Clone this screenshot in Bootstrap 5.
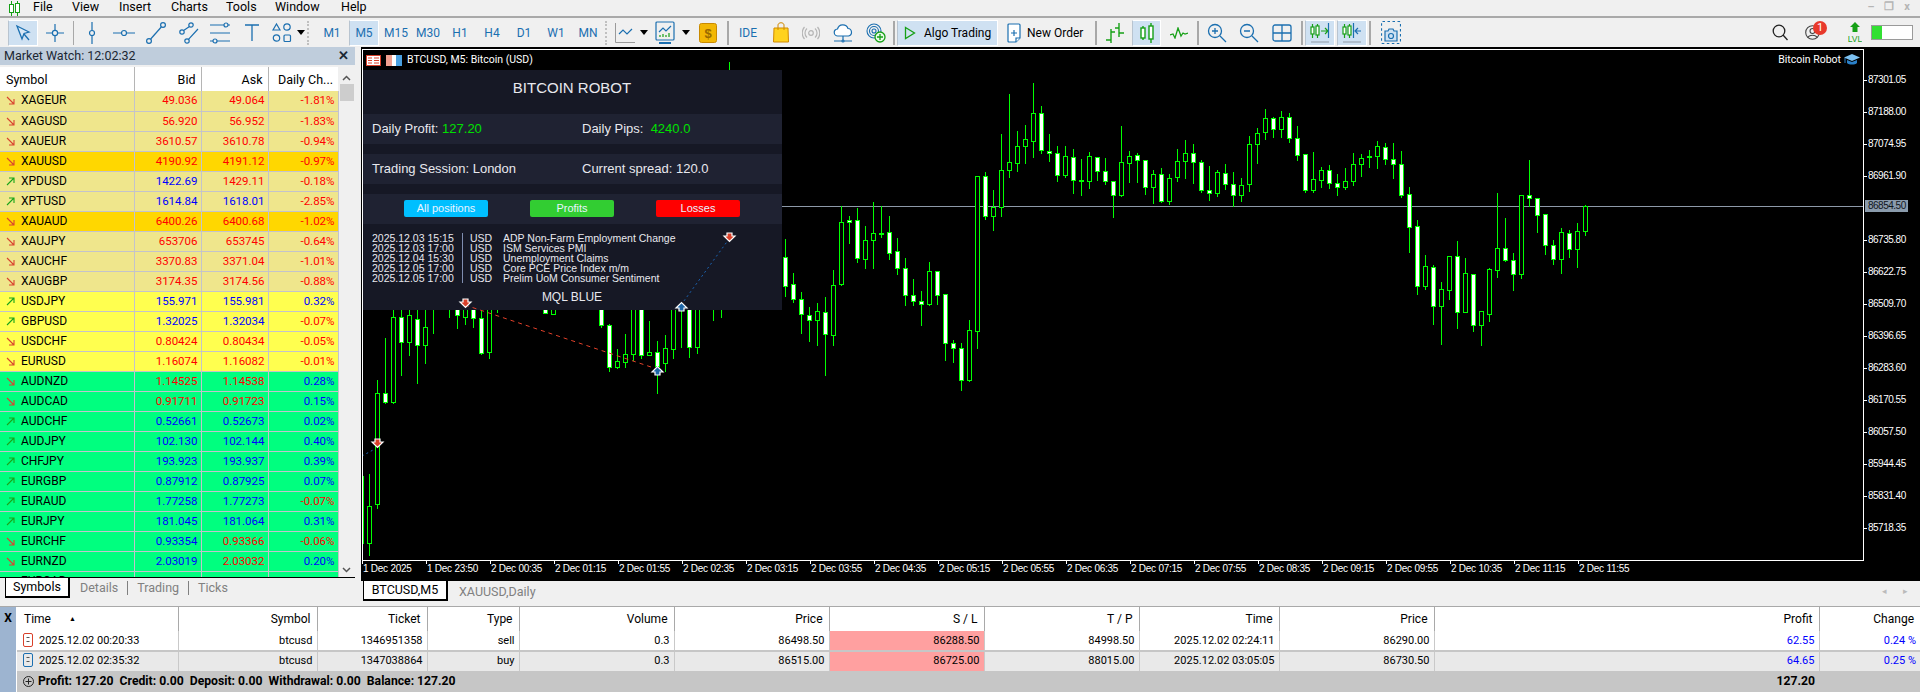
<!DOCTYPE html>
<html lang="en"><head><meta charset="utf-8"><title>MetaTrader 5</title>
<link href="https://cdn.jsdelivr.net/npm/bootstrap@5.3.0/dist/css/bootstrap.min.css" rel="stylesheet">
<script src="https://cdn.jsdelivr.net/npm/bootstrap@5.3.0/dist/js/bootstrap.bundle.min.js"></script>
<style>
html,body{height:692px;overflow:hidden}
body{font-family:Roboto,"Liberation Sans",sans-serif;font-size:11px;color:#000;background:#f0f0f0}
.mt-menu{height:16px;padding-left:7px;font-size:12.5px}
.mt-menu .logo{width:14px;margin-right:12px}
.mt-menu span{line-height:13px;align-self:flex-start}
.mt-m1{width:39px}.mt-m2{width:47px}.mt-m3{width:52px}.mt-m4{width:55px}.mt-m5{width:49px}.mt-m6{width:66px}
.winbtn{color:#b5b5b5;font-size:11px;width:18px;text-align:center;font-weight:700}
.mt-bar{height:31px;border-top:2px solid #a9a9a9;padding-left:8px;gap:2px;flex-shrink:0}
.tb{height:26px;display:flex;align-items:center;justify-content:center;flex-shrink:0;color:#1b6fb0;font-size:12px;border:1px solid transparent}
.tb.on{background:#cfe1f2;border-color:#fff #fff #fff #b8c4d0}
.tb svg{display:block}
.t6{width:6px}.t8{width:8px}.t26{width:26px}.t28{width:28px}.t29{width:29px}.t30{width:30px}.t31{width:31px}.t32{width:32px}.t34{width:34px}.t36{width:36px}
.algo{width:101px;color:#000;justify-content:flex-start;padding-left:6px;gap:8px}
.neworder{width:93px;color:#000;justify-content:flex-start;padding-left:6px;gap:6px}
.sep{width:2px;height:24px;background:#a8a8a8;flex-shrink:0}
.sep1{width:1px;margin:0 1px}
.grip{width:4px;height:24px;flex-shrink:0;border-left:2px dotted #c0c0c0}
.caret{width:0;height:0;border-left:4px solid transparent;border-right:4px solid transparent;border-top:5px solid #000}
.mainrow{height:559px}
.leftcol{width:360px;flex-shrink:0}
.mwtitle{height:18px;width:355px;background:#bfcddc;padding:0 6px 0 4px;font-size:12.5px;line-height:18px;color:#1b2733}
.mwbody{height:510px;width:355px;margin-top:2px}
.mwscroll{width:17px;background:#f0f0f0}
.scrollthumb{height:17px;background:#cdcdcd;margin:3px 1px 0}
table.mwt{width:338px;table-layout:fixed;--bs-table-color:#000;font-size:11.5px;border-color:#c3c3cb}
.mwt th,.mwt td{padding:0 3px 0 0;height:20px;line-height:19px;font-weight:400;text-align:right;border-bottom:1px solid #c3c3cb;border-right:1px solid #c3c3cb;white-space:nowrap;overflow:hidden;vertical-align:middle}
.mwt thead th{height:24px;background:#fff;border-bottom:0;border-right:1px solid #b5b5b5;padding-right:5px;font-size:12.5px}
.mwt thead th:last-child{border-right:0}
.mwt td:first-child,.mwt th:first-child{text-align:left;padding-left:6px}
.mwt td:first-child{font-size:12px}
.mwt td:first-child svg{margin-right:6px;vertical-align:-1px}
tr.rm{--bs-table-bg:#efe68c}tr.rg{--bs-table-bg:#ffd700}tr.ry{--bs-table-bg:#ffff4f}tr.rs{--bs-table-bg:#00ff7f}
.mwt td.r{color:#f00}.mwt td.b{color:#00f}
.mwtabs{height:29px;border-top:1px solid #000;width:355px;font-size:12.5px;color:#808080}
.tabon{height:20px;background:#fff;color:#000;border:1px solid #000;border-top:0;border-right-width:2px;border-bottom-width:2px;width:65px;text-align:center;line-height:18px;margin-left:5px;margin-right:10px}
.tabtxt{line-height:20px}
.tabsep{width:1px;height:14px;background:#808080;margin:3px 9px 0}
.chartcol{min-width:0;border-left:1px solid #f0f0f0}
.chartbox{height:534px;background:#000;position:relative;overflow:hidden;border-left:1px solid #000}
.chartbox>svg.candles{position:absolute;left:0;top:0}
.charttitle{position:absolute;left:4px;top:7px;color:#fff;font-size:10.5px;line-height:12px;gap:5px}
.chartname{position:absolute;right:60px;top:7px;color:#fff;font-size:10.5px;line-height:12px;gap:3px}
.robot{position:absolute;left:0;top:23px;width:420px;height:240px;background:#161825;color:#e8e8ee;font-family:"Liberation Sans",sans-serif;font-size:13px}
.robot .rtitle{height:44px;font-size:15px;line-height:36px;text-align:center}
.robot .rline{height:30px;background:#1f2232;line-height:30px;padding-left:10px}
.robot .rgap{height:10px}
.robot .rcell{width:210px}
.robot .pos{color:#00e000}
.rbtns{height:30px;background:#1f2232;padding:6px 26px 7px 42px;gap:42px}
.rbtn{width:84px;height:17px;border-radius:2px;text-align:center;line-height:17px;color:#e8f4ff;font-size:11px}
.rb1{background:#00bfff}.rb2{background:#32cd32}.rb3{background:#f00}
.rnews{padding:9px 0 0 10px;font-size:10.5px;line-height:10px}
.rnews .d{width:84px}.rnews .s{width:1px;background:#7f8db0;margin:0 7px 0 6px}.rnews .u{width:33px}
.rbrand{text-align:center;line-height:14px;margin-top:7px;font-size:12px}
.overlay{position:absolute;left:0;top:0;pointer-events:none}
.pxl{position:absolute;left:1503px;font-size:10px;line-height:12px;color:#fff;font-family:"Liberation Sans",sans-serif;letter-spacing:-.5px;width:45px;padding-left:3px}
.pxl.cur{background:#8a9bac;color:#10161c;width:43px}
.tlb{position:absolute;top:516px;font-size:10px;line-height:12px;color:#fff;font-family:"Liberation Sans",sans-serif;letter-spacing:-.25px;white-space:nowrap}
.ctabs{height:25px;font-size:12.5px;color:#808080}
.ctabon{width:85px;height:20px;background:#fff;color:#000;border:1px solid #000;border-top:0;border-right-width:2px;border-bottom-width:2px;text-align:center;line-height:18px;margin-left:2px;margin-right:11px}
.ctabtxt{line-height:22px}
.navarr{color:#bbb;font-size:9px;width:21px;text-align:center;line-height:20px}
.term{height:86px;border-top:1px solid #a9a9a9;background:#fff}
.tstrip{width:17px;background:#9db4d0;border-right:1px solid #fff;font-weight:700;font-size:12px;text-align:center;line-height:22px;color:#000;flex-shrink:0}
table.trt{width:1903px;table-layout:fixed;font-size:11px;--bs-table-color:#000;margin:0}
.trt th,.trt td{padding:0 4px 0 0;text-align:right;font-weight:400;white-space:nowrap;overflow:hidden;border-right:1px solid #c9c9c9;border-bottom:0;vertical-align:middle}
.trt thead th{height:24px;padding-right:6px;border-right:1px solid #a9a9a9;font-size:12px}
.trt th:last-child,.trt td:last-child{border-right:0}
.trt tbody td{line-height:18px}
.trt tr.row1 td{height:20px;border-bottom:2px solid #c6c6c6}
.trt tr.row2 td{height:19px}
.trt tr.row2{--bs-table-bg:#e9e9e9}
.trt td.sl{--bs-table-bg:#ffa0a0;background:#ffa0a0}
.trt td.bl{color:#00f}
.trt th.tl,.trt td.tl{text-align:left}
.trt th.tl{padding-left:7px}
.sortup{font-size:7px;vertical-align:2px;margin-left:18px}
.trt tr.tot td{--bs-table-bg:#c6c6c6;background:#c6c6c6;height:21px;font-weight:700;border-right:0;font-size:12.2px}
.trt td.tl svg{margin:0 6px 0 6px;vertical-align:-3px}
.trt tr.tot td.tl svg{margin-right:4px;vertical-align:-2px}
.lvlbox{width:20px;margin-left:18px}
.acct{width:26px;margin-left:4px}
.srch{width:26px}
.lvlbar{width:42px;height:15px;border:1px solid #9a9a9a;background:#fff;margin:0 7px 0 4px}
.lvlfill{background:#33e033}
.notif{background:#e8392b;width:14px;height:14px;top:0;right:-3px;line-height:14px;font-size:11px}
</style></head>
<body class="d-flex flex-column">

<div class="mt-menu d-flex align-items-center">
  <svg class="logo" width="14" height="15" viewBox="0 0 14 15"><g fill="none" stroke="#16a016"><path d="M4.5 0v15M10.5 0v15"/><rect x="2.5" y="3.5" width="4" height="8" fill="#fff"/><rect x="8.5" y="2.5" width="4" height="9" fill="#fff"/></g></svg>
  <span class="mt-m1">File</span><span class="mt-m2">View</span><span class="mt-m3">Insert</span><span class="mt-m4">Charts</span><span class="mt-m5">Tools</span><span class="mt-m6">Window</span><span>Help</span>
  <span class="ms-auto winbtn">–</span><span class="winbtn">❐</span><span class="winbtn me-1">x</span>
</div>

<div class="mt-bar d-flex align-items-center">
  <div class="tb t30 on"><svg width="18" height="18" viewBox="0 0 18 18" fill="#d8e8f6" stroke="#1b6fb0" stroke-width="1.3"><path d="M3 2l12 6-5 1.5L8 15z"/><path d="M10 10l5 6" /></svg></div>
  <div class="tb t30"><svg width="20" height="20" viewBox="0 0 20 20" fill="none" stroke="#1b6fb0" stroke-width="1.2"><path d="M10 1v6M10 13v6M1 10h6M13 10h6"/><circle cx="10" cy="10" r="2.6"/></svg></div>
  <div class="sep sep1"></div>
  <div class="tb t30"><svg width="20" height="22" viewBox="0 0 20 22" fill="none" stroke="#1b6fb0" stroke-width="1.2"><path d="M10 0v8.500M10 13.500v8.500"/><circle cx="10" cy="11" r="2.500"/></svg></div>
  <div class="tb t30"><svg width="22" height="14" viewBox="0 0 22 14" fill="none" stroke="#1b6fb0" stroke-width="1.2"><path d="M0 7h8.500M13.500 7h8.500"/><circle cx="11" cy="7" r="2.500"/></svg></div>
  <div class="tb t30"><svg width="22" height="24" viewBox="0 0 22 24" fill="none" stroke="#1b6fb0" stroke-width="1.2"><circle cx="4" cy="20" r="2.400"/><circle cx="18" cy="4" r="2.400"/><path d="M5.700 18L16.300 6"/></svg></div>
  <div class="tb t30"><svg width="22" height="24" viewBox="0 0 22 24" fill="none" stroke="#1b6fb0" stroke-width="1.2"><circle cx="5" cy="11" r="2.200"/><circle cx="14" cy="4" r="2.200"/><circle cx="10" cy="20" r="2.200"/><path d="M6.600 9.500L12.500 5.500M11.500 18.300L21 8"/></svg></div>
  <div class="tb t30"><svg width="22" height="22" viewBox="0 0 22 22" fill="none" stroke="#1b6fb0" stroke-width="1.2"><path d="M1 3h14M19 3h2M1 11h20M1 19h3M8 19h13"/><circle cx="17" cy="3" r="2"/><circle cx="6" cy="19" r="2"/></svg></div>
  <div class="tb t30"><svg width="16" height="18" viewBox="0 0 16 18" fill="none" stroke="#1b6fb0" stroke-width="1.3"><path d="M1 1h14M8 1v16"/></svg></div>
  <div class="tb t26"><svg width="20" height="22" viewBox="0 0 20 22" fill="none" stroke="#1b6fb0" stroke-width="1.2"><path d="M4.500 2L8 8H1z"/><circle cx="15" cy="5" r="3.200"/><rect x="12" y="13" width="6.500" height="6.500" rx="1"/><circle cx="4.500" cy="16" r="3.200"/></svg></div>
  <div class="tb t8"><span class="caret"></span></div>
  <div class="grip me-1"></div>
  <div class="tb t30">M1</div><div class="tb t30 on">M5</div><div class="tb t30">M15</div><div class="tb t30">M30</div><div class="tb t30">H1</div><div class="tb t30">H4</div><div class="tb t30">D1</div><div class="tb t30">W1</div><div class="tb t30">MN</div>
  <div class="grip"></div>
  <div class="tb t28"><svg width="20" height="20" viewBox="0 0 20 20" fill="none" stroke="#9a9a9a"><path d="M.5 0v19.500H20"/><path d="M4 11l4-4 4 4 5-5" stroke="#1b6fb0" stroke-width="1.2"/></svg></div>
  <div class="tb t6"><span class="caret"></span></div>
  <div class="tb t32"><svg width="20" height="24" viewBox="0 0 20 24" fill="none" stroke="#1b6fb0" stroke-width="1.2"><rect x="1" y="1" width="18" height="18" rx="1"/><path d="M4 22h12" stroke-width="2"/><path d="M4 11l4-4 3 3 5-5"/><path d="M5 16v-2M8 16v-3M11 16v-2M14 16v-4" stroke="#16a016"/></svg></div>
  <div class="tb t6"><span class="caret"></span></div>
  <div class="tb t34"><svg width="18" height="20" viewBox="0 0 18 20"><rect x=".5" y=".5" width="17" height="19" rx="2" fill="#f2b705" stroke="#c98a00"/><text x="9" y="15" text-anchor="middle" font-size="13" font-weight="700" font-family="Liberation Sans" fill="#9a6a00">$</text></svg></div>
  <div class="sep"></div>
  <div class="tb t34">IDE</div>
  <div class="tb t28"><svg width="16" height="21" viewBox="0 0 16 21"><path d="M1 6h14l.5 14H.5z" fill="#ffd21e" stroke="#d08a00"/><path d="M5 8V3c0-3 6-3 6 0v5" fill="none" stroke="#d08a00"/></svg></div>
  <div class="tb t28"><svg width="18" height="14" viewBox="0 0 18 14" fill="none" stroke="#b5b5b5" stroke-width="1.2"><circle cx="9" cy="7" r="2.300"/><path d="M5 2.500a6 6 0 000 9M13 2.500a6 6 0 010 9M2.500 1a9 9 0 000 12M15.500 1a9 9 0 010 12"/></svg></div>
  <div class="tb t32"><svg width="20" height="20" viewBox="0 0 20 20" fill="#fff" stroke="#1b6fb0" stroke-width="1.2"><path d="M5 13a3.500 3.500 0 01-.5-7A5.500 5.500 0 0115 5.500 3.800 3.800 0 0115.500 13z"/><path d="M1 18h18M10 13v5" fill="none"/><circle cx="10" cy="18" r="1"/></svg></div>
  <div class="tb t30"><svg width="20" height="20" viewBox="0 0 20 20" fill="none" stroke="#1b6fb0" stroke-width="1.1"><circle cx="8" cy="8" r="7"/><circle cx="8" cy="8" r="4.500"/><circle cx="8" cy="8" r="2"/><circle cx="14" cy="14" r="5" fill="#e9f9e9" stroke="#16a016" stroke-width="1.300"/><path d="M14 11v6M11 14h6" stroke="#16a016" stroke-width="1.300"/></svg></div>
  <div class="sep"></div>
  <div class="tb algo on"><svg width="12" height="14" viewBox="0 0 12 14" fill="none" stroke="#16a016" stroke-width="1.300"><path d="M1.500 1.500l9 5.500-9 5.500z"/></svg><span>Algo Trading</span></div>
  <div class="tb neworder"><svg width="14" height="20" viewBox="0 0 14 20" fill="#fff" stroke="#1b6fb0" stroke-width="1.200"><path d="M1 2q0-1 1-1h10q1 0 1 1v13l-4 4H2q-1 0-1-1z"/><path d="M7 7v6M4 10h6M9 19v-4h4"/></svg><span>New Order</span></div>
  <div class="sep"></div>
  <div class="tb t31"><svg width="20" height="20" viewBox="0 0 20 20" fill="none" stroke="#16a016" stroke-width="1.400"><path d="M6 6v14M1 17h5M6 9h4M14 0v14M10 5h4M14 10h5"/></svg></div>
  <div class="tb t29 on"><svg width="16" height="20" viewBox="0 0 16 20" fill="none" stroke="#16a016" stroke-width="1.400"><path d="M4 3v14M12 0v20"/><rect x="2" y="5" width="4" height="10" fill="#fff"/><rect x="10" y="3" width="4" height="13" fill="#fff"/></svg></div>
  <div class="tb t32"><svg width="18" height="12" viewBox="0 0 18 12" fill="none" stroke="#16a016" stroke-width="1.300"><path d="M0 8l3-1 2 4 3-10 3 8 2-3 2 1 3-1"/></svg></div>
  <div class="sep"></div>
  <div class="tb t32"><svg width="20" height="20" viewBox="0 0 20 20" fill="none" stroke="#1b6fb0" stroke-width="1.300"><circle cx="8" cy="8" r="6.500"/><path d="M8 5v6M5 8h6M13 13l6 6"/></svg></div>
  <div class="tb t28"><svg width="20" height="20" viewBox="0 0 20 20" fill="none" stroke="#1b6fb0" stroke-width="1.300"><circle cx="8" cy="8" r="6.500"/><path d="M5 8h6M13 13l6 6"/></svg></div>
  <div class="tb t34"><svg width="20" height="18" viewBox="0 0 20 18" fill="none" stroke="#1b6fb0" stroke-width="1.300"><rect x="1" y="1" width="18" height="16" rx="2"/><path d="M10 1v16M1 9h18"/></svg></div>
  <div class="sep"></div>
  <div class="tb t30 on"><svg width="20" height="20" viewBox="0 0 20 20" fill="none" stroke="#16a016" stroke-width="1.200"><path d="M2.500 1v14M7.500 1v14"/><rect x="1" y="4" width="3" height="7" fill="#fff"/><rect x="6" y="3" width="3" height="9" fill="#fff"/><path d="M11 8h6M15 5l3 3-3 3"/><path d="M18.500 0v15" stroke="#1b6fb0"/><path d="M1 19h18" stroke="#9aa7b3"/></svg></div>
  <div class="tb t30 on"><svg width="20" height="20" viewBox="0 0 20 20" fill="none" stroke="#16a016" stroke-width="1.200"><path d="M2.500 1v14M7.500 1v14"/><rect x="1" y="4" width="3" height="7" fill="#fff"/><rect x="6" y="3" width="3" height="9" fill="#fff"/><path d="M11.500 0v15" stroke="#1b6fb0"/><path d="M19 8h-5M16 5l-3 3 3 3" stroke="#1b6fb0"/><path d="M1 19h18" stroke="#9aa7b3"/></svg></div>
  <div class="sep"></div>
  <div class="tb t36"><svg width="20" height="23" viewBox="0 0 20 23" fill="none" stroke="#1b6fb0" stroke-width="1.200"><rect x=".5" y=".5" width="19" height="22" rx="1" stroke-dasharray="2.500 2.500"/><path d="M4 10h3l1-2h4l1 2h3v10H4z" fill="#cfe1f2"/><circle cx="10" cy="15" r="2.500"/></svg></div>
  <div class="ms-auto tb srch"><svg width="16" height="17" viewBox="0 0 16 17" fill="none" stroke="#222" stroke-width="1.300"><circle cx="7" cy="7" r="5.800"/><path d="M11 11l4.500 5"/></svg></div>
  <div class="tb position-relative acct"><svg width="15" height="15" viewBox="0 0 15 15" fill="none" stroke="#444" stroke-width="1.100"><circle cx="7.500" cy="7.500" r="6.800"/><circle cx="7.500" cy="6" r="2.500"/><path d="M3 12.500c1-3 8-3 9 0"/></svg><span class="position-absolute text-white text-center rounded-circle notif">1</span></div>
  <div class="tb lvlbox"><svg width="14" height="21" viewBox="0 0 14 21"><path d="M7 0l5 5H9.500v5h-5V5H2z" fill="#16a016"/><text x="7" y="20" text-anchor="middle" font-size="8.500" font-family="Liberation Sans" fill="#16a016" stroke="none">LVL</text></svg></div>
  <div class="progress rounded-0 lvlbar"><div class="progress-bar lvlfill" style="width:24%"></div></div>
</div>

<div class="d-flex mainrow">
  <div class="leftcol d-flex flex-column">
    <div class="mwtitle d-flex justify-content-between"><span>Market Watch: 12:02:32</span><span class="fw-bold">✕</span></div>
    <div class="mwbody d-flex overflow-hidden">
      <table class="table mwt mb-0" id="mw">
        <colgroup><col style="width:134px"><col style="width:67px"><col style="width:67px"><col style="width:70px"></colgroup>
        <thead><tr><th>Symbol</th><th>Bid</th><th>Ask</th><th>Daily Ch...</th></tr></thead>
        <tbody></tbody>
      </table>
      <div class="mwscroll flex-grow-1 d-flex flex-column align-items-center">
        <svg class="mt-2" width="9" height="6" viewBox="0 0 9 6" fill="none" stroke="#555" stroke-width="1.500"><path d="M1 5l3.500-3.500L8 5"/></svg>
        <div class="scrollthumb align-self-stretch"></div>
        <svg class="mt-auto mb-1" width="9" height="6" viewBox="0 0 9 6" fill="none" stroke="#555" stroke-width="1.500"><path d="M1 1l3.500 3.500L8 1"/></svg>
      </div>
    </div>
    <div class="mwtabs d-flex">
      <div class="tabon">Symbols</div><span class="tabtxt">Details</span><span class="tabsep"></span><span class="tabtxt">Trading</span><span class="tabsep"></span><span class="tabtxt">Ticks</span>
    </div>
  </div>

  <div class="chartcol flex-grow-1 d-flex flex-column">
    <div class="chartbox" id="chart">
      <svg class="candles" id="cd" width="1558" height="534" viewBox="362 47 1558 534" shape-rendering="crispEdges"></svg>
      <div class="robot">
        <div class="rtitle">BITCOIN ROBOT</div>
        <div class="rline d-flex"><div class="rcell">Daily Profit: <span class="pos">127.20</span></div><div>Daily Pips:&nbsp; <span class="pos">4240.0</span></div></div>
        <div class="rgap"></div>
        <div class="rline d-flex"><div class="rcell">Trading Session: London</div><div>Current spread: 120.0</div></div>
        <div class="rgap"></div>
        <div class="rbtns d-flex"><div class="rbtn rb1">All positions</div><div class="rbtn rb2">Profits</div><div class="rbtn rb3">Losses</div></div>
        <div class="rnews d-flex">
          <div class="d">2025.12.03 15:15<br>2025.12.03 17:00<br>2025.12.04 15:30<br>2025.12.05 17:00<br>2025.12.05 17:00</div>
          <div class="s"></div>
          <div class="u">USD<br>USD<br>USD<br>USD<br>USD</div>
          <div>ADP Non-Farm Employment Change<br>ISM Services PMI<br>Unemployment Claims<br>Core PCE Price Index m/m<br>Prelim UoM Consumer Sentiment</div>
        </div>
        <div class="rbrand">MQL BLUE</div>
      </div>
      <svg class="overlay" width="1558" height="534" viewBox="362 47 1558 534">
        <path d="M465 305L657 369" stroke="#e0402a" stroke-dasharray="4 4" fill="none"/>
        <path d="M681 305L729 239M362 456L373 450" stroke="#1b64b4" stroke-dasharray="2 3" fill="none"/>
        <g stroke="#fff" stroke-width="1.200" fill="#d9402a"><path d="M727 233h5v3h3l-5.500 5.500L724 236h3z"/><path d="M463 299h5v3h3l-5.500 5.500L460 302h3z"/><path d="M375 439h5v3h3l-5.500 5.500L372 442h3z"/></g>
        <g stroke="#fff" stroke-width="1.200" fill="#1d66a8"><path d="M679 311h5v-3h3l-5.500-5.500L676 308h3z"/><path d="M655 375h5v-3h3l-5.500-5.500L652 372h3z"/></g>
        <path d="M362.500 560.500V49.500H1863.500V560.500H362.500" fill="none" stroke="#fff" shape-rendering="crispEdges"/>
      </svg>
      <div class="charttitle d-flex align-items-center">
        <svg width="15" height="11" viewBox="0 0 15 11"><rect x=".5" y=".5" width="14" height="10" fill="#fff" stroke="#d9402a"/><path d="M2 3h4M8 3h5M2 5.500h4M8 5.500h5M2 8h4M8 8h5" stroke="#d9402a"/></svg>
        <svg width="16" height="11" viewBox="0 0 16 11"><rect width="6" height="11" fill="#f0a090"/><rect x="6" y="3" width="4" height="8" fill="#fff"/><rect x="10" width="6" height="11" fill="#4aa0e0"/><rect x="6" width="4" height="3" fill="#fff"/></svg>
        <span>BTCUSD, M5:&nbsp;Bitcoin (USD)</span>
      </div>
      <div class="chartname d-flex align-items-center"><span>Bitcoin Robot</span>
        <svg width="16" height="12" viewBox="0 0 16 12"><path d="M8 0l8 3.500L8 7 0 3.500z" fill="#7cc0f0"/><path d="M3 6v3c2 2 8 2 10 0V6L8 8z" fill="#2a80c8"/><path d="M1 4v5" stroke="#2a80c8"/></svg></div>
    </div>
    <div class="ctabs d-flex">
      <div class="ctabon">BTCUSD,M5</div><span class="ctabtxt">XAUUSD,Daily</span>
      <span class="ms-auto navarr">◂</span><span class="navarr me-1">▸</span>
    </div>
  </div>
</div>

<div class="term d-flex">
  <div class="tstrip">X</div>
  <table class="table trt">
    <colgroup><col style="width:161px"><col style="width:139px"><col style="width:110px"><col style="width:92px"><col style="width:155px"><col style="width:155px"><col style="width:155px"><col style="width:155px"><col style="width:140px"><col style="width:155px"><col style="width:385px"><col style="width:101px"></colgroup>
    <thead><tr><th class="tl">Time<span class="sortup">▲</span></th><th>Symbol</th><th>Ticket</th><th>Type</th><th>Volume</th><th>Price</th><th>S / L</th><th>T / P</th><th>Time</th><th>Price</th><th>Profit</th><th>Change</th></tr></thead>
    <tbody>
      <tr class="row1"><td class="tl"><svg width="10" height="14" viewBox="0 0 10 14" fill="none" stroke="#d9402a"><rect x=".5" y=".5" width="9" height="13" rx="1.500"/><path d="M3.500 4.500h3M3.500 8.500h3" stroke="#555"/></svg>2025.12.02 00:20:33</td><td>btcusd</td><td>1346951358</td><td>sell</td><td>0.3</td><td>86498.50</td><td class="sl">86288.50</td><td>84998.50</td><td>2025.12.02 02:24:11</td><td>86290.00</td><td class="bl">62.55</td><td class="bl">0.24 %</td></tr>
      <tr class="row2"><td class="tl"><svg width="10" height="14" viewBox="0 0 10 14" fill="none" stroke="#1b6fb0"><rect x=".5" y=".5" width="9" height="13" rx="1.500"/><path d="M3.500 4.500h3M3.500 8.500h3" stroke="#555"/></svg>2025.12.02 02:35:32</td><td>btcusd</td><td>1347038864</td><td>buy</td><td>0.3</td><td>86515.00</td><td class="sl">86725.00</td><td>88015.00</td><td>2025.12.02 03:05:05</td><td>86730.50</td><td class="bl">64.65</td><td class="bl">0.25 %</td></tr>
      <tr class="tot"><td class="tl" colspan="10"><svg width="11" height="11" viewBox="0 0 11 11" fill="none" stroke="#222"><circle cx="5.500" cy="5.500" r="5"/><path d="M5.500 2.500v6M2.500 5.500h6"/></svg>Profit: 127.20&nbsp; Credit: 0.00&nbsp; Deposit: 0.00&nbsp; Withdrawal: 0.00&nbsp; Balance: 127.20</td><td>127.20</td><td></td></tr>
    </tbody>
  </table>
</div>

<script>
// symbol, dir(0 down,1 up), row class, bid, ask, change, colours
var rows=[["XAGEUR",0,"rm","49.036","49.064","-1.81%","rrr"],["XAGUSD",0,"rm","56.920","56.952","-1.83%","rrr"],["XAUEUR",0,"rm","3610.57","3610.78","-0.94%","rrr"],["XAUUSD",0,"rg","4190.92","4191.12","-0.97%","rrr"],["XPDUSD",1,"rm","1422.69","1429.11","-0.18%","brr"],["XPTUSD",1,"rm","1614.84","1618.01","-2.85%","bbr"],["XAUAUD",0,"rg","6400.26","6400.68","-1.02%","rrr"],["XAUJPY",0,"rm","653706","653745","-0.64%","rrr"],["XAUCHF",0,"rm","3370.83","3371.04","-1.01%","rrr"],["XAUGBP",0,"rm","3174.35","3174.56","-0.88%","rrr"],["USDJPY",1,"ry","155.971","155.981","0.32%","bbb"],["GBPUSD",1,"ry","1.32025","1.32034","-0.07%","bbr"],["USDCHF",0,"ry","0.80424","0.80434","-0.05%","rrr"],["EURUSD",0,"ry","1.16074","1.16082","-0.01%","rrr"],["AUDNZD",0,"rs","1.14525","1.14538","0.28%","rrb"],["AUDCAD",0,"rs","0.91711","0.91723","0.15%","rrb"],["AUDCHF",1,"rs","0.52661","0.52673","0.02%","bbb"],["AUDJPY",1,"rs","102.130","102.144","0.40%","bbb"],["CHFJPY",1,"rs","193.923","193.937","0.39%","bbb"],["EURGBP",1,"rs","0.87912","0.87925","0.07%","bbb"],["EURAUD",1,"rs","1.77258","1.77273","-0.07%","bbr"],["EURJPY",1,"rs","181.045","181.064","0.31%","bbb"],["EURCHF",0,"rs","0.93354","0.93366","-0.06%","brr"],["EURNZD",0,"rs","2.03019","2.03032","0.20%","brb"],["EURCAD",0,"rs","1.62877","1.62891","0.06%","rrb"]];
var ad='<svg width="9" height="9" viewBox="0 0 9 9" fill="none" stroke="#d9432f" stroke-width="1.100"><path d="M1 1l7 7M8 3v5H3"/></svg>',au='<svg width="9" height="9" viewBox="0 0 9 9" fill="none" stroke="#1aa51a" stroke-width="1.100"><path d="M1 8l7-7M3 1h5v5"/></svg>';
document.querySelector('#mw tbody').innerHTML=rows.map(function(r){return '<tr class="'+r[2]+'"><td>'+(r[1]?au:ad)+r[0]+'</td><td class="'+r[6][0]+'">'+r[3]+'</td><td class="'+r[6][1]+'">'+r[4]+'</td><td class="'+r[6][2]+'">'+r[5]+'</td></tr>'}).join('');

// candles: [wickTop,wickBot,bodyTop,bodyBot,white]
var A=[[534,708,592,680,1],[637,726,673,719,1],[694,819,718,764,1],[739,843,766,782,1],[727,855,754,782,0],[708,945,757,824,1],[628,855,676,827,0],[435,675,487,674,0],[465,549,481,488,1],[440,606,481,596,1],[495,624,541,599,0],[423,624,520,542,0],[435,531,519,522,0],[465,597,517,581,1],[531,642,574,626,1],[591,735,625,707,1],[655,735,706,725,1],[690,795,724,734,1],[603,735,634,734,0],[630,732,634,707,1],[703,900,703,851,1],[838,906,850,866,1],[846,990,865,962,1],[778,962,811,962,0],[349,864,349,815,0],[334,477,349,470,1],[388,510,441,467,0],[220,468,331,443,0],[99,351,307,332,0],[210,333,259,311,0],[192,309,238,260,0],[67,291,160,245,0],[136,279,160,272,1],[220,303,274,281,1],[255,363,280,347,1],[255,351,289,347,0],[265,399,292,362,1],[294,405,361,365,0],[274,384,289,365,0],[291,360,292,334,1],[291,371,334,365,1],[364,471,364,407,1],[196,407,307,407,0],[270,366,289,311,0],[277,366,286,302,1],[297,402,301,383,1],[327,429,343,383,0],[321,426,343,425,1],[340,432,355,425,0],[265,362,304,353,0],[238,354,280,305,0],[250,369,280,308,1],[297,396,307,392,1],[316,420,391,401,1],[327,408,337,401,0],[310,387,340,374,1],[334,438,373,407,1],[352,423,376,407,0],[225,393,253,374,0],[202,309,220,254,0],[144,237,175,218,0],[168,231,175,209,1],[151,231,172,209,0],[156,246,172,236,1],[195,300,235,287,1],[283,396,283,392,1],[274,396,358,392,0]];
var B=[[348,410,361,392,0],[342,414,361,400,1],[370,435,400,412,1],[351,417,394,413,0],[306,405,343,395,0],[309,378,325,344,0],[297,351,319,323,0],[270,354,289,319,0],[276,342,292,328,1],[276,384,328,343,1],[300,440,343,437,1],[408,606,433,532,1],[507,732,529,709,1],[612,717,649,709,0],[643,822,652,769,1],[694,882,718,769,0],[619,747,619,721,0],[571,834,619,787,1],[622,787,670,787,0],[673,843,673,826,1],[784,885,784,826,0],[652,813,658,793,0],[426,681,595,661,0],[501,632,595,631,1],[606,720,631,673,1],[436,684,436,673,0],[327,469,436,445,1],[445,546,445,496,1],[493,612,493,586,1],[568,642,586,628,1],[532,669,547,628,0],[538,621,550,598,1],[517,651,544,598,0],[463,555,469,544,0]];
// real pixels for the ones left of / under the panel: [cx,wickTop,wickBot,bodyTop,bodyBot,white]
var L=[[361.5,476,543,476,543,1],[369.5,473,555,506,543,0],[377.5,379,508,393,504,0],[385.5,337,403,393,402,1],[393.5,300,403,317,402,0],[401.5,300,375,317,342,1],[409.5,300,355,315,342,0],[417.5,300,383,319,345,1],[425.5,300,363,327,345,0],[433.5,300,333,327,327,0],[449.5,300,317,300,300,0],[457.5,300,328,300,315,1],[465.5,300,324,300,317,0],[473.5,300,327,300,318,1],[481.5,300,354,318,353,1],[489.5,300,358,300,352,0],[497.5,300,312,300,300,0],[545.5,300,313,300,313,1],[553.5,300,314,300,314,0],[601.5,300,327,300,325,1],[609.5,323,371,325,367,1],[617.5,348,368,361,367,0],[625.5,333,367,354,362,0],[633.5,300,360,300,354,0],[641.5,300,358,300,355,1],[649.5,320,355,352,355,0],[657.5,340,393,352,366,1],[665.5,334,371,348,363,0],[673.5,300,358,300,349,0],[681.5,300,347,300,300,0],[689.5,300,357,300,347,1],[697.5,300,353,300,347,0],[713.5,300,320,300,300,0],[721.5,300,317,300,300,0],[729.5,61,100,100,100,0]];
function cdl(cx,w){var f=function(v){return Math.round(v)+.5},s='<path d="M'+cx+' '+f(w[0])+'V'+f(w[1])+'" stroke="#0f0"/>';if(w[3]>w[2])s+='<rect x="'+(cx-2)+'" y="'+f(w[2])+'" width="4" height="'+Math.round(w[3]-w[2])+'" fill="'+(w[4]?'#fff':'#000')+'" stroke="#0f0"/>';return s}
var h='<path d="M362 206.500H1863" stroke="#8d99a8"/>';
L.forEach(function(c){h+=cdl(c[0],c.slice(1))});
A.forEach(function(c,i){h+=cdl(785.5+8*i,[60+c[0]/3,60+c[1]/3,60+c[2]/3,60+c[3]/3,c[4]])});
B.forEach(function(c,i){h+=cdl(1321.5+8*i,[50+c[0]/3,50+c[1]/3,50+c[2]/3,50+c[3]/3,c[4]])});
var ch=document.getElementById('chart'),P=[["87301.05",80],["87188.00",112],["87074.95",144],["86961.90",176],["86735.80",240],["86622.75",272],["86509.70",304],["86396.65",336],["86283.60",368],["86170.55",400],["86057.50",432],["85944.45",464],["85831.40",496],["85718.35",528]];
P.forEach(function(p){h+='<path d="M1863 '+(p[1]+.5)+'h4" stroke="#fff"/>';var d=document.createElement('div');d.className='pxl';d.style.top=(p[1]-53)+'px';d.textContent=p[0];ch.appendChild(d)});
var d=document.createElement('div');d.className='pxl cur';d.style.top=(206-53)+'px';d.textContent='86854.50';ch.appendChild(d);
["1 Dec 2025","1 Dec 23:50","2 Dec 00:35","2 Dec 01:15","2 Dec 01:55","2 Dec 02:35","2 Dec 03:15","2 Dec 03:55","2 Dec 04:35","2 Dec 05:15","2 Dec 05:55","2 Dec 06:35","2 Dec 07:15","2 Dec 07:55","2 Dec 08:35","2 Dec 09:15","2 Dec 09:55","2 Dec 10:35","2 Dec 11:15","2 Dec 11:55"].forEach(function(t,i){var x=362+64*i;h+='<path d="M'+(x+.5)+' 560v4" stroke="#fff"/>';var e=document.createElement('div');e.className='tlb';e.style.left=(x-362+1)+'px';e.textContent=t;ch.appendChild(e)});
document.getElementById('cd').innerHTML=h;
</script>
</body></html>
